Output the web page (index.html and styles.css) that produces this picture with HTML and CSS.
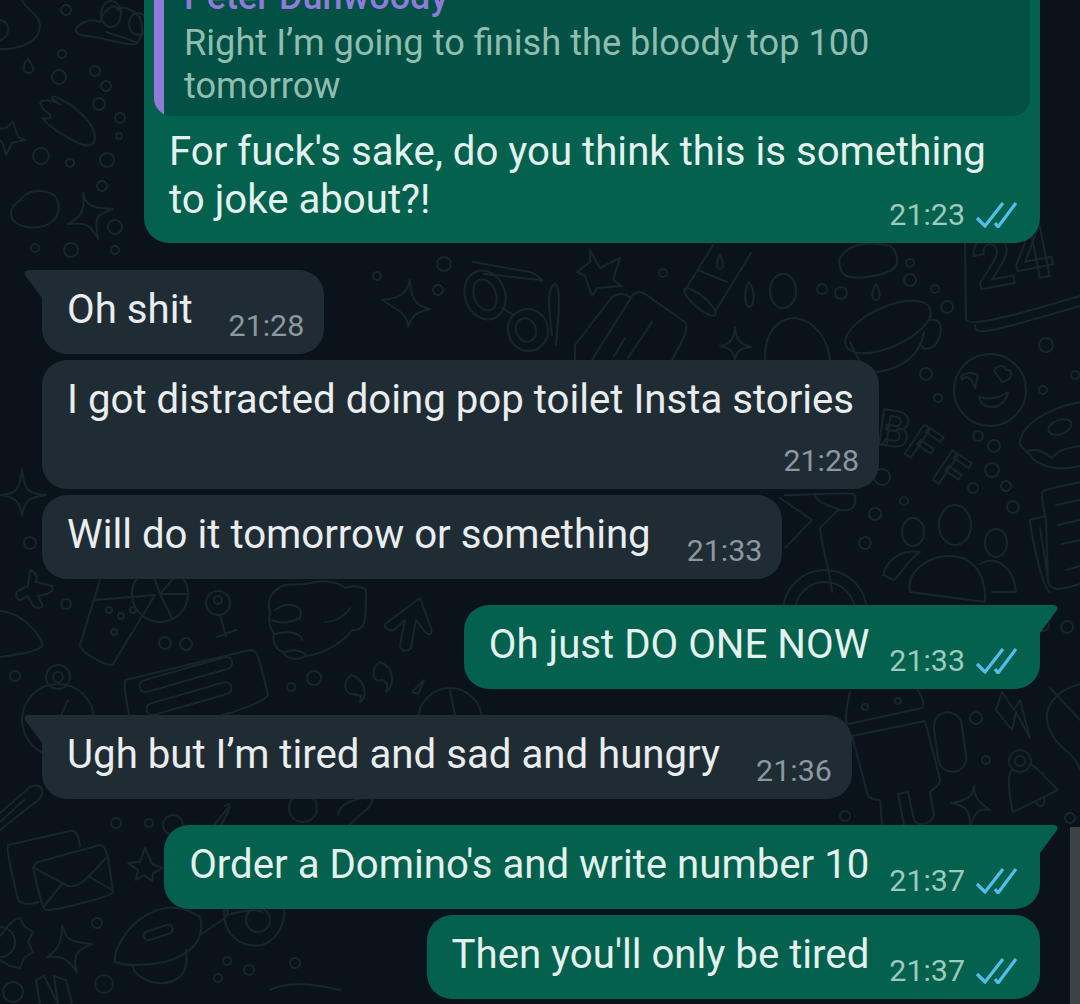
FILE: index.html
```html
<!DOCTYPE html>
<html lang="en">
<head>
	<meta charset="UTF-8">
	<title>Chat</title>
	<link rel="stylesheet" href="styles.css">
</head>
<body>
	<div class="chat">
		<!-- wallpaper doodles, drawn in page coordinates -->
		<svg class="wallpaper" width="1080" height="1004" viewBox="0 0 1080 1004">
			<g class="dots">
				<circle cx="66" cy="10" r="5"/><circle cx="62" cy="54" r="4"/><circle cx="59" cy="77" r="7"/><circle cx="95" cy="71" r="5"/>
				<circle cx="106" cy="86" r="5"/><circle cx="99" cy="104" r="6"/><circle cx="120" cy="118" r="5"/><circle cx="119" cy="136" r="3"/>
				<circle cx="41" cy="156" r="8"/><circle cx="70" cy="163" r="4"/><circle cx="107" cy="160" r="7"/><circle cx="102" cy="186" r="5"/>
				<circle cx="115" cy="227" r="7"/><circle cx="35" cy="248" r="4"/><circle cx="71" cy="250" r="7"/><circle cx="115" cy="250" r="4"/>
				<circle cx="444" cy="264" r="7"/><circle cx="377" cy="276" r="4"/><circle cx="438" cy="290" r="5"/><circle cx="663" cy="273" r="4"/>
				<circle cx="822" cy="289" r="5"/><circle cx="841" cy="293" r="6"/><circle cx="910" cy="263" r="4"/><circle cx="910" cy="280" r="6"/><circle cx="935" cy="289" r="4"/><circle cx="947" cy="307" r="6"/><circle cx="1046" cy="345" r="7"/>
				<circle cx="926" cy="374" r="6"/><circle cx="938" cy="398" r="4"/><circle cx="1043" cy="390" r="4"/><circle cx="1075" cy="375" r="4"/>
				<circle cx="978" cy="436" r="5"/><circle cx="994" cy="446" r="6"/><circle cx="992" cy="470" r="7"/><circle cx="973" cy="488" r="5"/><circle cx="1006" cy="486" r="5"/><circle cx="1013" cy="507" r="6"/>
				<circle cx="882" cy="477" r="8"/><circle cx="904" cy="501" r="4"/><circle cx="875" cy="514" r="6"/><circle cx="865" cy="543" r="6"/>
				<circle cx="30" cy="543" r="6"/><circle cx="66" cy="604" r="5"/><circle cx="165" cy="643" r="6"/><circle cx="186" cy="644" r="6"/><circle cx="15" cy="676" r="5"/>
				<circle cx="314" cy="678" r="7"/><circle cx="291" cy="687" r="4"/>
				<circle cx="1043" cy="625" r="6"/><circle cx="1067" cy="627" r="6"/><circle cx="976" cy="718" r="6"/><circle cx="986" cy="760" r="4"/><circle cx="845" cy="816" r="5"/><circle cx="1070" cy="818" r="5"/>
				<circle cx="116" cy="823" r="5"/><circle cx="149" cy="823" r="4"/><circle cx="173" cy="825" r="10"/><circle cx="97" cy="923" r="5"/>
				<circle cx="227" cy="961" r="4"/><circle cx="218" cy="978" r="4"/><circle cx="249" cy="970" r="5"/><circle cx="295" cy="963" r="5"/><circle cx="104" cy="984" r="9"/>
			</g>
			<g class="lines">
				<!-- top left -->
				<path d="M0 49C22 50 40 40 40 26C40 14 28 12 22 0"/>
				<path d="M28 59C22 64 22 73 29 73C36 73 33 65 28 59Z"/>
				<path d="M40 103C44 98 52 101 60 104C46 96 52 94 62 100C78 108 95 124 95 138C95 148 84 146 76 142C62 134 50 128 42 118C52 120 54 116 44 110Z"/>
				<path d="M13 122L18 137L25 140L12 143L6 155L3 144L-8 130L6 128Z"/>
				<path d="M22 198C32 186 50 192 55 196C62 206 60 220 44 226C30 230 10 226 11 212C11 204 20 202 22 198Z"/>
				<path d="M83 193C86 205 90 208 113 209C96 214 94 218 98 239C90 224 86 222 68 224C82 216 85 212 83 193Z"/>
				<path d="M76 30C78 22 92 18 100 22C104 8 116 2 118 10C124 4 136 12 140 18C146 36 138 42 136 44C120 46 108 38 88 36C82 36 76 34 76 30Z"/>
				<path d="M106 32C118 36 126 38 136 42"/>
				<ellipse cx="111" cy="14" rx="10" ry="13"/>
				<ellipse cx="138" cy="24" rx="9" ry="11"/>
				<!-- glasses, star, suitcase, tube -->
				<ellipse cx="485" cy="295" rx="20" ry="25" transform="rotate(-20 485 295)"/>
				<ellipse cx="485" cy="295" rx="11" ry="16" transform="rotate(-20 485 295)"/>
				<ellipse cx="528" cy="330" rx="20" ry="21" transform="rotate(-20 528 330)"/>
				<ellipse cx="526" cy="330" rx="10" ry="12" transform="rotate(-20 526 330)"/>
				<path d="M502 308L512 314M473 262L530 272C540 276 546 284 540 280L484 274"/>
				<path d="M555 283C547 290 548 300 552 335M555 283C562 290 558 320 556 345"/>
				<path d="M590 250L600 268L620 258L613 280L622 286L597 288L592 296L585 276L577 272L590 262Z"/>
				<path d="M575 360L575 345L612 297C618 292 626 294 630 297"/>
				<path d="M592 360L632 296C636 291 642 291 648 296L685 322C688 326 686 334 680 345L672 360"/>
				<path d="M614 356L625 338M628 358L652 322"/>
				<path d="M713 245L684 292M751 253L715 312M698 270L727 282"/>
				<ellipse cx="700" cy="302" rx="20" ry="6" transform="rotate(40 700 302)"/>
				<path d="M720 255C716 262 716 268 720 269C724 268 724 262 720 255Z"/>
				<path d="M749 282C743 292 745 306 749 307C754 306 756 292 749 282Z"/>
				<ellipse cx="783" cy="291" rx="13" ry="17"/>
				<path d="M876 284C871 292 871 299 876 300C881 299 881 292 876 284Z"/>
				<path d="M410 280C411 300 416 306 430 309C416 312 412 316 408 327C408 316 402 312 382 300C398 298 406 296 410 280Z"/>
				<path d="M735 327C736 340 740 344 751 347C740 348 736 352 735 360C734 352 730 348 720 346C730 344 734 340 735 327Z"/>
				<path d="M765 360C764 330 780 318 795 318C815 320 828 340 830 360"/>
				<path d="M840 258C848 244 870 240 890 246C898 252 900 264 892 270C880 276 858 280 846 276C840 272 838 264 840 258Z"/>
				<!-- coffee cup -->
				<ellipse cx="888" cy="327" rx="46" ry="20" transform="rotate(-24 888 327)"/>
				<path d="M850 342C856 356 864 372 878 372C900 368 920 358 924 332"/>
				<path d="M930 320C942 318 944 330 936 344C930 350 924 350 922 346"/>
				<text class="doodle-text" transform="translate(978 290) rotate(-11)">24</text>
				<path d="M965 240L966 320C970 326 1000 320 1080 296M975 325C975 336 984 334 1080 306"/>
				<!-- emoji, donut, newspaper -->
				<circle cx="990" cy="390" r="36"/>
				<path d="M975 388C972 378 966 374 962 380C958 374 970 372 975 374C980 372 976 382 975 388Z"/>
				<path d="M1002 382C1014 380 1013 368 1006 370C1004 362 992 368 995 372Z"/>
				<path d="M979 397C988 400 1000 398 1008 392C1006 402 998 408 990 407C984 406 980 402 979 397Z"/>
				<path d="M1080 402C1050 408 1020 424 1020 444C1024 452 1030 452 1032 458C1040 466 1060 472 1080 466"/>
				<ellipse cx="1060" cy="427" rx="12" ry="7" transform="rotate(-20 1060 427)"/>
				<path d="M1026 452C1040 446 1048 456 1052 458C1060 448 1070 448 1080 446"/>
				<path d="M1045 490L1080 482M1045 490C1040 492 1042 500 1046 520L1048 582C1052 592 1060 590 1080 584"/>
				<path d="M1030 520C1030 526 1042 590 1050 592M1030 520L1045 516M1040 528L1048 578"/>
				<path d="M1056 505L1080 500M1058 525L1080 520M1062 544L1080 540M1066 570L1080 566"/>
				<text class="doodle-text bff" transform="translate(876 444) rotate(8)">B</text>
				<text class="doodle-text bff" transform="translate(902 452) rotate(34)">F</text>
				<text class="doodle-text bff" transform="translate(930 478) rotate(34)">F</text>
				<!-- people, bike -->
				<ellipse cx="913" cy="532" rx="11" ry="14"/>
				<ellipse cx="955" cy="525" rx="16" ry="20"/>
				<ellipse cx="996" cy="543" rx="11" ry="14"/>
				<path d="M883 575C888 556 905 550 920 552C908 560 900 575 894 580Z"/>
				<path d="M910 592C906 570 930 556 950 556C970 556 986 570 985 602Z"/>
				<path d="M980 564C996 554 1014 568 1016 592L992 592"/>
				<path d="M785 495C800 496 838 492 854 494C858 504 854 512 840 510C825 504 820 504 815 496"/>
				<path d="M780 498L812 520L785 548M838 510L820 528C822 550 830 570 832 592"/>
				<circle cx="825" cy="612" r="42"/>
				<circle cx="825" cy="612" r="30"/>
				<!-- lemon glass row -->
				<path d="M22 469C20 490 16 494 0 495C16 497 20 502 22 516C24 502 28 497 46 495C28 494 24 490 22 469Z"/>
				<path d="M30 570C36 572 38 578 36 582L52 586C54 590 52 594 38 596L42 604C44 608 36 610 32 604L28 596L20 600C16 600 14 592 20 590L28 586Z"/>
				<path d="M0 611C16 612 36 626 43 645C38 652 20 654 0 657"/>
				<path d="M100 580L80 645C80 652 108 668 113 664L155 595L95 600"/>
				<circle cx="160" cy="594" r="28"/>
				<path d="M160 594L176 575M160 594L186 594M160 594L172 618M160 594L150 566"/>
				<circle cx="109" cy="610" r="3"/><circle cx="121" cy="616" r="3"/><circle cx="133" cy="610" r="3"/><circle cx="114" cy="632" r="3"/>
				<circle cx="218" cy="603" r="12"/><circle cx="218" cy="600" r="4"/>
				<path d="M220 615L226 636M217 637L236 630"/>
				<path d="M285 585C272 590 266 600 270 612C268 620 270 628 274 634C272 642 276 650 283 652C286 660 300 660 306 656C325 654 345 640 352 630C366 632 366 620 366 590C360 585 350 586 345 588C335 580 320 580 305 584Z"/>
				<path d="M275 610C290 600 305 606 300 618C288 624 280 624 272 620M275 634C290 630 302 634 302 640M285 652C296 648 304 652 306 656M325 622C335 622 345 616 350 608"/>
				<path d="M420 598L385 624C384 628 390 632 394 630L405 620L400 646C402 652 408 652 411 648L416 620L425 632C429 636 433 634 431 628Z"/>
				<path d="M125 680C124 690 126 700 130 720M125 680L250 650C258 650 258 654 268 695C264 702 240 710 220 716"/>
				<rect x="138" y="682" width="96" height="12" rx="6" transform="rotate(-16 138 682)"/>
				<rect x="145" y="705" width="88" height="12" rx="6" transform="rotate(-16 145 705)"/>
				<path d="M352 675C342 680 344 696 354 694C362 698 362 692 360 702C368 698 366 680 352 675ZM380 662C370 668 372 684 382 680C388 682 388 686 386 692C394 686 396 668 380 662Z"/>
				<circle cx="58" cy="677" r="12"/><circle cx="58" cy="677" r="5"/>
				<circle cx="58" cy="720" r="36"/>
				<path d="M52 735L68 700"/>
				<circle cx="450" cy="720" r="32"/>
				<path d="M412 692L424 680L418 694L412 692ZM450 690L456 720"/>
				<!-- android, bell, bolt -->
				<path d="M850 692C846 710 844 722 848 724L922 708C926 704 920 690 912 684"/>
				<circle cx="865" cy="707" r="3"/><circle cx="898" cy="701" r="3"/>
				<path d="M852 736L925 721C930 740 938 770 940 780C940 786 932 790 930 792L934 815C930 826 918 826 914 820L908 792L898 794L904 825M852 736L868 796C872 800 878 800 880 800L882 825"/>
				<rect x="936" y="712" width="28" height="60" rx="14" transform="rotate(-8 950 742)"/>
				<path d="M1002 692L996 710L1012 730L1016 712L1030 738L1020 700L1014 710Z"/>
				<circle cx="1020" cy="761" r="5"/><circle cx="1020" cy="761" r="11"/>
				<path d="M1012 770C1006 776 1010 800 1013 812L1058 790C1046 780 1042 770 1030 764"/>
				<path d="M1036 802C1040 810 1046 806 1044 797"/>
				<path d="M974 786C972 796 970 800 951 803C966 806 970 810 970 826C976 810 980 808 990 810C982 804 974 800 974 786Z"/>
				<path d="M1050 688L1080 720M1080 684C1055 690 1040 710 1050 730C1056 748 1075 752 1080 770"/>
				<!-- envelopes, clip -->
				<path d="M8 845L70 831C76 830 78 834 80 846M8 845C5 850 16 890 18 900C24 906 34 904 38 902"/>
				<path d="M38 862L100 845C106 846 108 852 113 892C112 896 60 910 46 910C42 910 36 880 33 868C34 864 36 864 38 862Z"/>
				<path d="M34 868L68 886C78 888 84 882 106 858M44 906L62 884M88 876L112 890"/>
				<path d="M145 848L152 864L163 868L153 873L152 881L144 875L136 880L138 870L128 863L140 862Z"/>
				<path d="M0 936C6 930 10 920 20 918L24 926L33 932L28 942L33 952L24 958L20 968L10 966L0 960"/>
				<circle cx="0" cy="942" r="15"/>
				<path d="M62 925C66 940 70 942 92 944C76 950 72 956 77 972C68 958 62 956 47 957C58 950 62 942 62 925Z"/>
				<path d="M115 955C122 928 160 890 200 917C206 940 190 955 165 962C145 966 125 966 115 962Z"/>
				<rect x="143" y="928" width="30" height="9" rx="4.5" transform="rotate(-18 158 932)"/>
				<path d="M132 965C136 980 160 988 175 980C186 974 188 962 186 950M200 935L225 918C230 916 226 900 224 912M224 912C224 935 240 948 262 945C282 938 288 915 282 900M224 916C236 912 256 908 262 912"/>
				<circle cx="258" cy="920" r="12"/>
				<path d="M210 830L228 808M225 806C232 800 232 808 218 830"/>
				<path d="M0 813L30 787C42 782 46 792 38 800L0 830M0 822L24 800"/>
				<path d="M40 1004L36 980L44 976L58 1004M58 1004L54 976L66 980L72 1004"/>
				<circle cx="13" cy="992" r="10"/>
				<path d="M270 990C290 980 320 985 340 990"/>
				<circle cx="303" cy="808" r="14"/>
				<path d="M340 835C360 810 375 810 372 795C360 800 340 800 338 815"/>
				<path d="M0 40C10 38 12 22 0 20"/>
			</g>
		</svg>

		<div class="thread">
			<div class="row out top">
				<div class="bubble wide">
					<div class="quote">
						<div class="quote-name">Peter Dunwoody</div>
						<div class="quote-text">Right I’m going to finish the bloody top 100<br>tomorrow</div>
					</div>
					<div class="body">
						<div class="text">For fuck's sake, do you think this is something<br>to joke about?!</div>
						<div class="meta">
							<span class="time">21:23</span>
							<svg class="ticks" width="42" height="26" viewBox="0 0 42 26"><path d="M2 16L10 24L28 1M20 21L23 25L41 1"/></svg>
						</div>
					</div>
				</div>
			</div>

			<div class="row in first">
				<div class="bubble tail">
					<div class="body inline">
						<div class="text">Oh shit</div>
						<div class="meta"><span class="time">21:28</span></div>
					</div>
				</div>
			</div>
			<div class="row in">
				<div class="bubble">
					<div class="body stacked">
						<div class="text">I got distracted doing pop toilet Insta stories</div>
						<div class="meta"><span class="time">21:28</span></div>
					</div>
				</div>
			</div>
			<div class="row in">
				<div class="bubble">
					<div class="body inline">
						<div class="text">Will do it tomorrow or something</div>
						<div class="meta"><span class="time">21:33</span></div>
					</div>
				</div>
			</div>

			<div class="row out first">
				<div class="bubble tail">
					<div class="body inline">
						<div class="text">Oh just DO ONE NOW</div>
						<div class="meta">
							<span class="time">21:33</span>
							<svg class="ticks" width="42" height="26" viewBox="0 0 42 26"><path d="M2 16L10 24L28 1M20 21L23 25L41 1"/></svg>
						</div>
					</div>
				</div>
			</div>

			<div class="row in first">
				<div class="bubble tail">
					<div class="body inline">
						<div class="text">Ugh but I’m tired and sad and hungry</div>
						<div class="meta"><span class="time">21:36</span></div>
					</div>
				</div>
			</div>

			<div class="row out first">
				<div class="bubble tail">
					<div class="body inline">
						<div class="text">Order a Domino's and write number 10</div>
						<div class="meta">
							<span class="time">21:37</span>
							<svg class="ticks" width="42" height="26" viewBox="0 0 42 26"><path d="M2 16L10 24L28 1M20 21L23 25L41 1"/></svg>
						</div>
					</div>
				</div>
			</div>
			<div class="row out">
				<div class="bubble">
					<div class="body inline">
						<div class="text">Then you'll only be tired</div>
						<div class="meta">
							<span class="time">21:37</span>
							<svg class="ticks" width="42" height="26" viewBox="0 0 42 26"><path d="M2 16L10 24L28 1M20 21L23 25L41 1"/></svg>
						</div>
					</div>
				</div>
			</div>
		</div>

		<div class="scrollbar"></div>
	</div>
</body>
</html>
```

FILE: styles.css
```css
html,body{
	margin: 0;
	height: 100%;
}
body{
	background-color: #0a1319;
	font-family: Roboto, "Liberation Sans", sans-serif;
}
.chat{
	position: relative;
	height: 1004px;
	overflow: hidden;
}
.wallpaper{
	position: absolute;
	left: 0;
	top: 0;
}
.wallpaper circle,.wallpaper path,.wallpaper ellipse,.wallpaper rect{
	fill: none;
	stroke: #1a252b;
	stroke-width: 2;
	stroke-linejoin: round;
	stroke-linecap: round;
}
.doodle-text{
	font-family: Roboto, sans-serif;
	font-size: 70px;
	font-weight: 700;
	fill: none;
	stroke: #1a252b;
	stroke-width: 2;
}
.bff{
	font-size: 50px;
}

/* messages sit on the bottom edge, the oldest one runs off the top */
.thread{
	position: relative;
	height: 999px;
	display: flex;
	flex-direction: column;
	justify-content: flex-end;
	gap: 6px;
}
.row{
	display: flex;
	flex: none;
}
.row.in{
	justify-content: flex-start;
	padding-left: 42px;
}
.row.out{
	justify-content: flex-end;
	padding-right: 40px;
}
.row.first{
	margin-top: 20px;
}
.row.top{
	margin-bottom: 1px;
}
.bubble{
	position: relative;
	border-radius: 25px;
}
.in .bubble{
	background-color: #202c33;
	color: #e9edef;
}
.out .bubble{
	background-color: #03614d;
	color: #e3f2ee;
}
.wide{
	width: 896px;
}
.in .tail{
	border-top-left-radius: 0;
}
.out .tail{
	border-top-right-radius: 0;
}
.tail::before{
	content: "";
	position: absolute;
	top: 0;
	width: 18px;
	height: 28px;
}
.in .tail::before{
	left: -18px;
	background-color: #202c33;
	clip-path: path("M18 0L4 0Q-1 1 1 5L18 28Z");
}
.out .tail::before{
	right: -18px;
	background-color: #03614d;
	clip-path: path("M0 0L14 0Q19 1 17 5L0 28Z");
}

.quote{
	margin: 0 10px;
	padding: 0 20px 9px 30px;
	border-radius: 18px;
	background: linear-gradient(to right, #8f7cd9 10px, #025144 10px);
}
.quote-name{
	font-size: 36px;
	font-weight: 500;
	line-height: 48px;
	color: #8f7cd9;
}
.quote-text{
	font-size: 36.2px;
	line-height: 43px;
	color: #90bdb0;
}

.body{
	padding: 12px 23px 13px 25px;
	display: grid;
}
.text{
	font-size: 40.2px;
	line-height: 48px;
	white-space: nowrap;
}
.time{
	font-size: 30.4px;
	line-height: 30px;
}
.in .time{
	color: #8a989f;
}
.out .time{
	color: #9ccabc;
}
.meta{
	display: flex;
	align-items: center;
	gap: 10px;
}
.ticks path{
	fill: none;
	stroke: #53bdeb;
	stroke-width: 3.2;
}
.wide .text,.wide .meta{
	grid-area: 1 / 1;
}
.wide .text{
	padding-bottom: 6px;
}
.wide .meta{
	justify-self: end;
	align-self: end;
}
.inline{
	padding: 16px 23px 13px 25px;
	display: flex;
	align-items: flex-end;
}
.in .inline{
	padding-right: 20px;
}
.inline .text{
	margin-bottom: 7px;
}
.in .inline .meta{
	margin-left: 36px;
}
.out .inline .meta{
	margin-left: 20px;
}
.stacked{
	padding: 16px 25px 13px 25px;
}
.stacked .meta{
	justify-self: end;
	margin-top: 22px;
	margin-right: -5px;
}
.scrollbar{
	position: absolute;
	right: 0;
	top: 827px;
	width: 10px;
	height: 177px;
	background-color: #3b4347;
}
```
